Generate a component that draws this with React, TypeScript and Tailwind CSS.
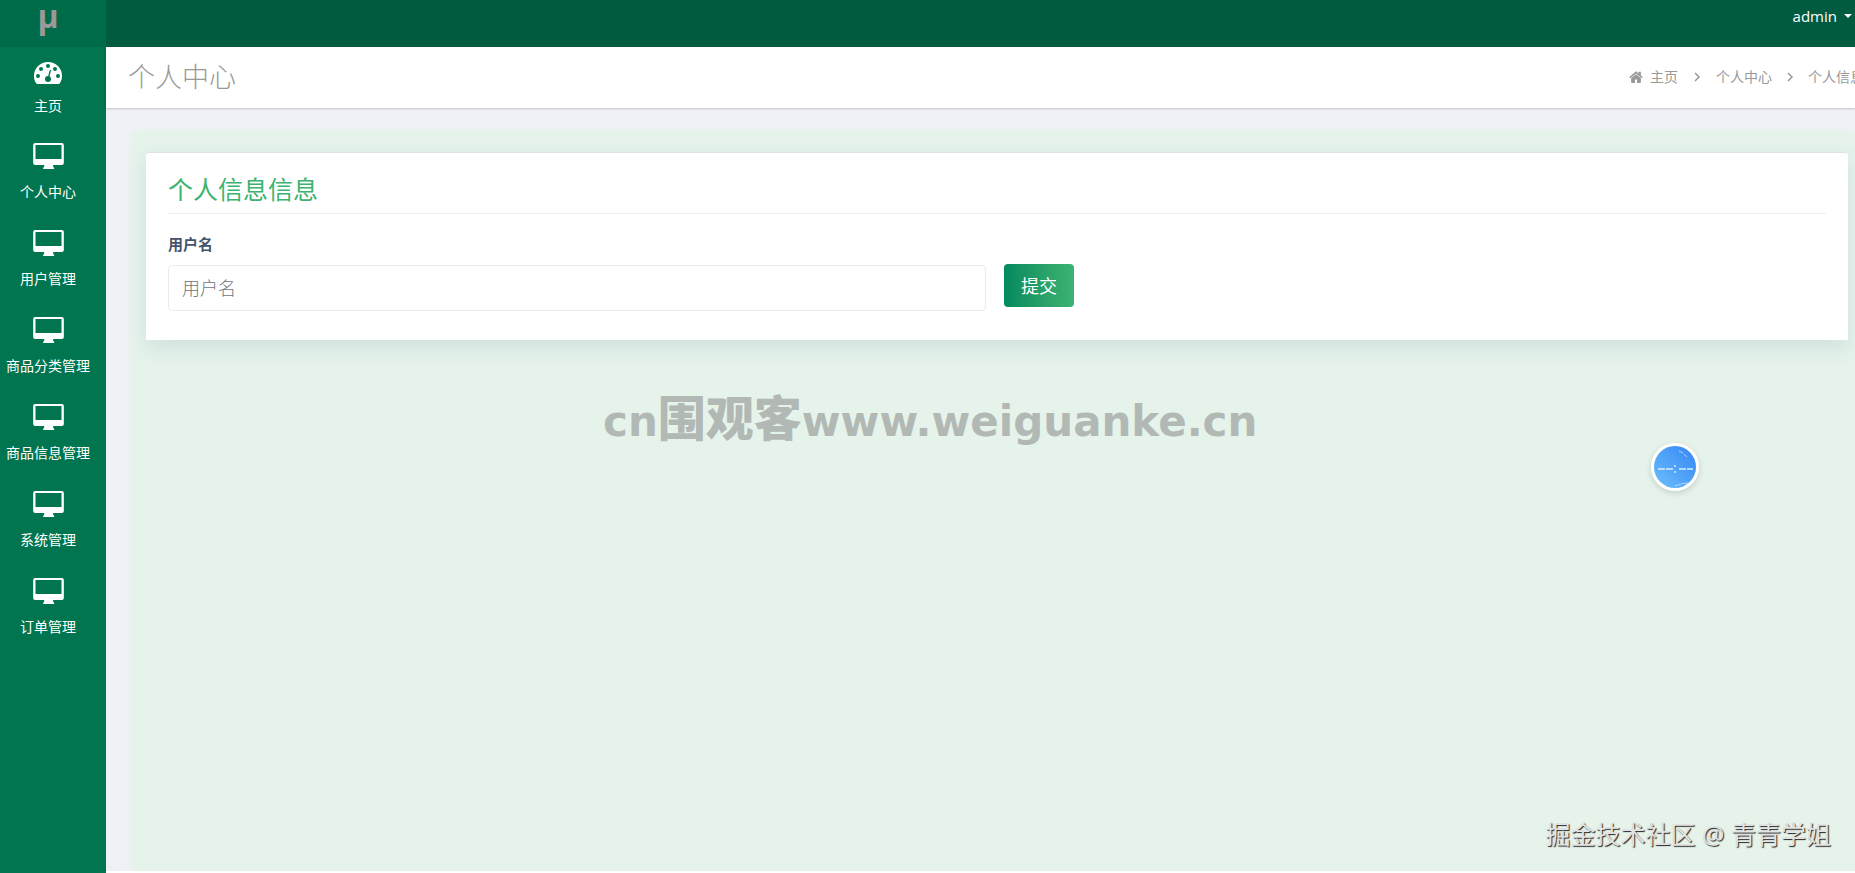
import { useState } from "react";

const menu = ["个人中心", "用户管理", "商品分类管理", "商品信息管理", "系统管理", "订单管理"];

function DashboardIcon() {
  return (
    <svg viewBox="0 0 84 66" className="h-[22px] w-7" aria-hidden="true">
      <path
        fill="#fff"
        d="M42 0a42 42 0 0 0-42 42c0 8 2 15 6 21 1 2 3 3 5 3h62c2 0 4-1 5-3 4-6 6-13 6-21A42 42 0 0 0 42 0z"
      />
      <g fill="#00754f">
        <circle cx="12" cy="42" r="6" />
        <circle cx="21" cy="21" r="6" />
        <circle cx="42" cy="12" r="6" />
        <circle cx="63" cy="21" r="6" />
        <circle cx="72" cy="42" r="6" />
        <circle cx="42" cy="51" r="9" />
      </g>
      <path d="M43 48l6-22" stroke="#00754f" strokeWidth="4" strokeLinecap="round" />
    </svg>
  );
}

function MonitorIcon() {
  return (
    <svg viewBox="0 0 92 78" className="h-[26px] w-[31px]" aria-hidden="true">
      <path
        fill="#fff"
        fillRule="evenodd"
        d="M6 0h80a6 6 0 0 1 6 6v54a6 6 0 0 1-6 6H60v6l3 2v4H30v-4l3-2v-6H6a6 6 0 0 1-6-6V6a6 6 0 0 1 6-6zm1 6v42h78V6z"
      />
    </svg>
  );
}

function HomeIcon() {
  return (
    <svg viewBox="0 0 40 34" className="h-3 w-[14px]" fill="#999" aria-hidden="true">
      <path d="M20 9L6 20v12c0 1 1 2 2 2h9V24h6v10h9c1 0 2-1 2-2V20z" />
      <path d="M39 17l-5-4V3c0-1 0-1-1-1h-5c-1 0-1 0-1 1v4l-5-5c-1-1-3-1-4 0L1 17c-1 0-1 1 0 1l1 2h2L20 7l16 13h2l1-2c1 0 1-1 0-1z" />
    </svg>
  );
}

function Chevron() {
  return (
    <svg viewBox="0 0 8 10" className="h-[10px] w-2" fill="none" stroke="#999" strokeWidth="1.5" aria-hidden="true">
      <path d="M2 1l4 4-4 4" />
    </svg>
  );
}

export default function App() {
  const [username, setUsername] = useState("");

  return (
    <div className="relative flex min-h-screen overflow-hidden bg-white font-['Noto_Sans','Noto_Sans_CJK_SC',sans-serif] text-sm text-[#999]">
      <aside className="w-[106px] shrink-0 bg-[#00754f]">
        <div className="flex h-[47px] justify-center bg-[#006b4b] pr-[10px]">
          <a href="#" className="font-['Open_Sans',sans-serif] text-[32px] leading-8 font-bold text-[#999]">
            μ
          </a>
        </div>
        <nav className="w-24 text-white">
          <a href="#" className="flex h-[84px] flex-col items-center pt-[15px]">
            <DashboardIcon />
            <span className="mt-3 leading-5">主页</span>
          </a>
          {menu.map((item) => (
            <a key={item} href="#" className="flex h-[87px] flex-col items-center pt-3 whitespace-nowrap">
              <MonitorIcon />
              <span className="mt-[13px] leading-5">{item}</span>
            </a>
          ))}
        </nav>
      </aside>

      <div className="flex min-w-0 flex-1 flex-col">
        <header className="flex h-[47px] items-start justify-end bg-[#005b41] pr-[3px]">
          <button type="button" className="flex items-center gap-[7px] pt-1 font-['Open_Sans',sans-serif] text-[15px] leading-6 text-white">
            admin
            <span className="border-x-4 border-t-4 border-x-transparent border-t-white" />
          </button>
        </header>

        <div className="z-10 flex h-[61px] items-center justify-between bg-white pl-[22px] shadow-[0_1px_2px_rgba(0,0,0,0.2)]">
          <h1 className="text-[27px] font-light">个人中心</h1>
          <nav className="-mr-[9px] flex shrink-0 items-center pb-[2px] whitespace-nowrap">
            <a href="#" className="flex items-center gap-[7px]">
              <HomeIcon />
              主页
            </a>
            <span className="px-[15px]"><Chevron /></span>
            <a href="#">个人中心</a>
            <span className="px-[14px]"><Chevron /></span>
            <span>个人信息</span>
          </nav>
        </div>

        <main className="mb-[2px] flex flex-1 flex-col overflow-hidden bg-[#f0f1f6] pt-6 pl-[26px]">
          <div className="flex-1 bg-[#e5f3eb] pt-5 pr-[7px] pl-[14px] shadow-[0_0_10px_2px_#e5f3eb]">
            <section className="rounded-t-[3px] border-t border-[#dde3e3] bg-white px-[22px] pt-[18px] pb-[29px] shadow-[0_8px_20px_rgba(60,90,120,0.12)]">
              <h2 className="border-b border-[#eceef0] pb-[6px] text-[25px] leading-9 text-[#3cb371]">个人信息信息</h2>
              <form onSubmit={(e) => e.preventDefault()}>
                <label htmlFor="username" className="mt-5 block text-[15px] leading-5 font-bold text-[#44546c]">
                  用户名
                </label>
                <div className="mt-[10px] flex items-start">
                  <div className="w-1/2 pt-px pr-[11px]">
                    <input
                      id="username"
                      type="text"
                      value={username}
                      onChange={(e) => setUsername(e.target.value)}
                      placeholder="用户名"
                      className="h-[46px] w-full rounded border border-[#e9ecef] px-[13px] text-lg font-light text-[#495057] placeholder:text-[#6c757d]"
                    />
                  </div>
                  <button
                    type="submit"
                    className="ml-[7px] h-[43px] rounded bg-linear-to-r from-[#008a5e] to-[#3cb371] px-[17px] text-lg text-white"
                  >
                    提交
                  </button>
                </div>
              </form>
            </section>
          </div>
        </main>
      </div>

      <div className="pointer-events-none absolute top-[387px] left-[603px] flex h-14 items-baseline font-['DejaVu_Sans',sans-serif] text-[42px] leading-[56px] font-bold whitespace-nowrap text-[#b2b9b5]">
        cn
        <span className="font-['Noto_Sans_CJK_SC',sans-serif] text-5xl leading-[56px] font-black">围观客</span>
        www.weiguanke.cn
      </div>

      <div className="absolute top-[443px] right-[156px] size-12 rounded-full border-[3px] border-white shadow-[0_2px_6px_rgba(0,0,0,0.15)]">
        <svg viewBox="0 0 42 42" className="size-full" aria-hidden="true">
          <defs>
            <linearGradient id="orb" x1="0" y1="1" x2="1" y2="0">
              <stop offset="0" stopColor="#6cc0fb" />
              <stop offset="1" stopColor="#3485f5" />
            </linearGradient>
          </defs>
          <circle cx="21" cy="21" r="21" fill="url(#orb)" />
          <g fill="none" stroke="#d8edff">
            <path d="M4 23h15M25 23h14" strokeWidth="1.5" strokeDasharray="7 1" />
            <path d="M21 19v2M21 25v2" strokeWidth="1.5" />
            <path d="M25 5l4 2M30 8l3 3M21 40q7-3 13-3" strokeWidth="0.7" />
          </g>
        </svg>
      </div>

      <div className="pointer-events-none absolute right-6 bottom-[21px] text-[25px] leading-9 whitespace-nowrap text-[#e3e3e3] [text-shadow:1px_1px_1px_#222]">
        掘金技术社区 @ 青青学姐
      </div>
    </div>
  );
}
